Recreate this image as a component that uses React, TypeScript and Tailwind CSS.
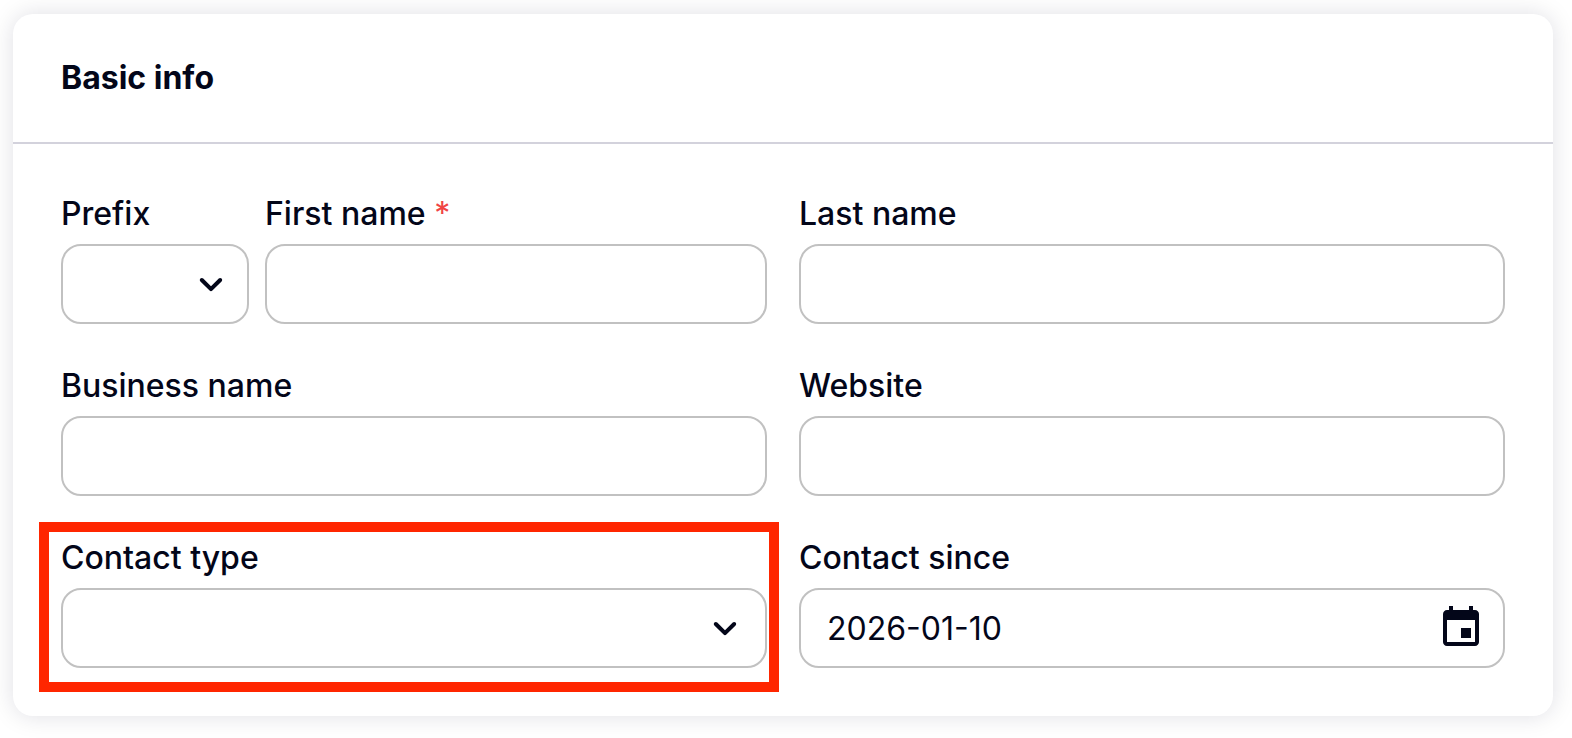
import React from 'react';

const controlClass =
  'block w-full h-20 appearance-none rounded-[20px] border-2 border-[#c1c1c1] bg-white px-[26px] text-[32px] text-[#030619] outline-none';

interface FieldProps {
  id: string;
  label: string;
  required?: boolean;
  className?: string;
  children: React.ReactNode;
}

const Field: React.FC<FieldProps> = ({ id, label, required, className = '', children }) => (
  <div className={className}>
    <label htmlFor={id} className="mb-2 block text-[32px] leading-[44px] font-medium whitespace-nowrap">
      {label}
      {required && <> <span className="font-normal text-[#f04444]">*</span></>}
    </label>
    {children}
  </div>
);

const TextField: React.FC<Omit<FieldProps, 'children'>> = (props) => (
  <Field {...props}>
    <input id={props.id} type="text" required={props.required} className={controlClass} />
  </Field>
);

interface SelectFieldProps extends Omit<FieldProps, 'children'> {
  options: string[];
  iconClass: string;
}

const SelectField: React.FC<SelectFieldProps> = ({ options, iconClass, ...props }) => (
  <Field {...props}>
    <div className="relative">
      <select id={props.id} defaultValue="" className={controlClass}>
        <option value=""></option>
        {options.map((option) => (
          <option key={option} value={option}>{option}</option>
        ))}
      </select>
      <div className={`pointer-events-none absolute inset-y-0 flex items-center ${iconClass}`}>
        <svg width="48" height="48" viewBox="0 0 24 24" fill="currentColor" aria-hidden="true">
          <path d="M8.12 9.29 12 13.17l3.88-3.88c.39-.39 1.02-.39 1.41 0 .39.39.39 1.02 0 1.41l-4.59 4.59c-.39.39-1.02.39-1.41 0L6.7 10.7c-.39-.39-.39-1.02 0-1.41.39-.38 1.03-.39 1.42 0z" />
        </svg>
      </div>
    </div>
  </Field>
);

const App: React.FC = () => {
  return (
    <div className="bg-white pt-[14px] pr-[19px] pb-[22px] pl-[13px] font-['Inter',sans-serif] text-[#030619] antialiased">
      <section className="rounded-[20px] bg-white shadow-[0_0_24px_rgba(3,6,50,0.13)]">
        <header className="border-b-2 border-[#d3d2dc] px-12 py-10">
          <h2 className="text-[32px] leading-[48px] font-bold">Basic info</h2>
        </header>

        <form className="grid grid-cols-2 gap-x-8 gap-y-10 p-12">
          <div className="flex gap-4">
            <SelectField
              id="prefix"
              label="Prefix"
              options={['Mr', 'Mrs', 'Ms', 'Dr']}
              iconClass="right-[14px]"
              className="w-[188px] shrink-0"
            />
            <TextField id="first-name" label="First name" required className="min-w-0 flex-1" />
          </div>
          <TextField id="last-name" label="Last name" />

          <TextField id="business-name" label="Business name" />
          <TextField id="website" label="Website" />

          <div className="relative">
            <SelectField
              id="contact-type"
              label="Contact type"
              options={['Client', 'Lead', 'Vendor']}
              iconClass="right-[18px]"
            />
            {/* highlight frame around the field */}
            <div className="pointer-events-none absolute -top-[14px] -right-3 -bottom-6 -left-[22px] border-10 border-[#ff2600]" />
          </div>

          <Field id="contact-since" label="Contact since">
            <div className="relative">
              <input id="contact-since" type="text" defaultValue="2026-01-10" className={controlClass} />
              <button
                type="button"
                aria-label="Open calendar"
                className="absolute inset-y-0 right-5 flex items-center"
              >
                <svg width="48" height="48" viewBox="0 0 24 24" fill="currentColor" aria-hidden="true">
                  <path d="M17 12h-5v5h5v-5zM16 1v2H8V1H6v2H5c-1.11 0-1.99.9-1.99 2L3 19c0 1.1.89 2 2 2h14c1.1 0 2-.9 2-2V5c0-1.1-.9-2-2-2h-1V1h-2zm3 18H5V8h14v11z" />
                </svg>
              </button>
            </div>
          </Field>
        </form>
      </section>
    </div>
  );
};

export default App;
